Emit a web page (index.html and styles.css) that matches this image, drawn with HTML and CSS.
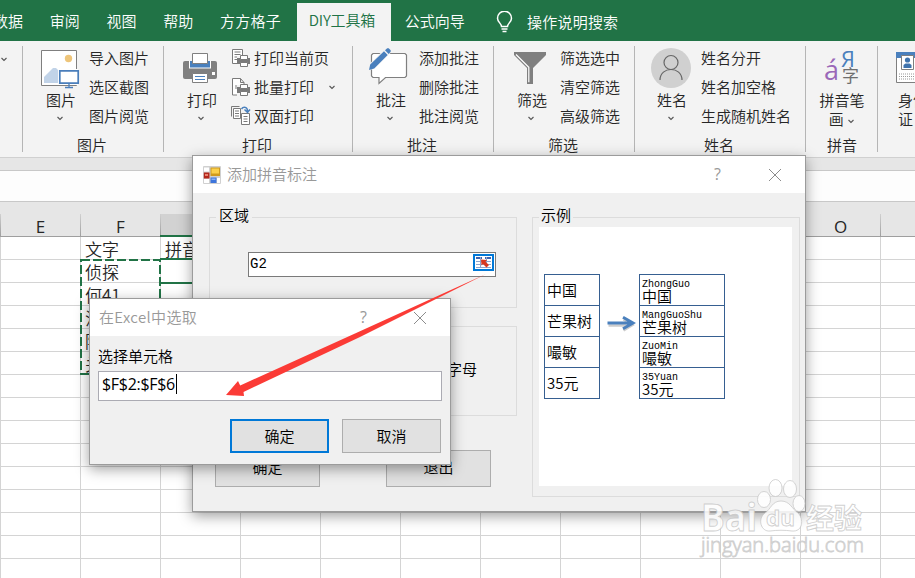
FILE: index.html
```html
<!DOCTYPE html>
<html lang="zh-CN">
<head>
  <meta charset="UTF-8">
  <meta name="viewport" content="width=device-width, initial-scale=1">
  <title>DIY工具箱 - 添加拼音标注</title>
  <link rel="stylesheet" href="styles.css">
</head>
<body>
  <!-- Tabs -->
  <nav class="tabs">
    <span class="tab">数据</span>
    <span class="tab">审阅</span>
    <span class="tab">视图</span>
    <span class="tab">帮助</span>
    <span class="tab four">方方格子</span>
    <span class="tab active">DIY工具箱</span>
    <span class="tab wide">公式向导</span>
    <svg class="bulb" width="17" height="22" viewBox="0 0 17 22" fill="none" stroke="#fff" stroke-width="1.5">
      <path d="M5.5 15.5c0-3-4-4.500-4-8.300a7 7 0 0 1 14 0c0 3.800-4 5.300-4 8.300zM5.500 18h6M6.500 20.500h4"/>
    </svg>
    <span class="search">操作说明搜索</span>
  </nav>

  <!-- Ribbon -->
  <div class="ribbon">
    <div class="group group-first"><svg class="chev" viewBox="0 0 8 8"><path d="M1.500 3L4 5.500 6.500 3"/></svg></div>

    <div class="group group-normal">
      <div class="tools">
        <div class="big">
          <svg width="56" height="46" viewBox="33 44 56 46">
            <path d="M41.500 50.500h35v35h-35z" fill="#fff" stroke="#7f7f7f"/>
            <circle cx="68.500" cy="58.500" r="3.700" fill="#eec57a"/>
            <path d="M44 83v-6l9-9h3l5 5v10z" fill="#c1d3e8"/>
            <path d="M58 69h20v16H58z" fill="#fff"/>
            <path d="M59.800 70.800h18.400v12.400H59.800z" fill="#fff" stroke="#4a7ebb" stroke-width="1.700"/>
            <path d="M69 84v3M65 87.500h8" stroke="#4a7ebb" stroke-width="1.300"/>
          </svg>
          <span>图片</span>
          <svg class="chev" viewBox="0 0 8 8"><path d="M1.500 3L4 5.500 6.500 3"/></svg>
        </div>
        <div class="list"><span>导入图片</span><span>选区截图</span><span>图片阅览</span></div>
      </div>
      <div class="caption">图片</div>
    </div>

    <div class="group group-print">
      <div class="tools">
        <div class="big">
          <svg width="56" height="46" viewBox="174 44 56 46">
            <rect x="183" y="61" width="34" height="18" rx="2" fill="#808080"/>
            <path d="M189 61h22v7.500h-22z" fill="#fff"/>
            <path d="M190 61h20v6.500h-20z" fill="#4a80bd"/>
            <path d="M192.500 53.500h15v10h-15z" fill="#fff" stroke="#7f7f7f"/>
            <path d="M192.500 73.500h15v9h-15z" fill="#fff" stroke="#7f7f7f"/>
            <path d="M195 76.500h10M195 79.500h10" stroke="#4a80bd"/>
            <path d="M212 72h3v3h-3z" fill="#fff"/>
          </svg>
          <span>打印</span>
          <svg class="chev" viewBox="0 0 8 8"><path d="M1.500 3L4 5.500 6.500 3"/></svg>
        </div>
        <div class="list">
          <span>
            <svg class="small" width="20" height="20" viewBox="0 0 20 20" fill="#fff" stroke="#7a7a7a">
              <path d="M1.500 1.500h10v14h-10z"/><path d="M3.500 4h6M3.500 6.500h6M3.500 9h4M3.500 11.500h3"/>
              <path d="M6 8h14v11H6z" stroke="none" fill="#f3f3f3"/>
              <rect x="6.500" y="10.500" width="12" height="5" fill="#7a7a7a"/><path d="M9.500 7.500h7v4h-7zM9.500 14.500h7v4h-7z"/>
            </svg>打印当前页
          </span>
          <span>
            <svg class="small" width="20" height="20" viewBox="0 0 20 20" fill="#fff" stroke="#7a7a7a">
              <path d="M1.500 1.500h8l3.500 4v12.500H1.500zM9.500 1.500v4H13"/><path d="M4 9h2M4 11h2" />
              <path d="M6 8h14v11H6z" stroke="none" fill="#f3f3f3"/>
              <rect x="6.500" y="10.500" width="12" height="5" fill="#7a7a7a"/><path d="M9.500 7.500h7v4h-7zM9.500 14.500h7v4h-7z"/>
            </svg>批量打印
            <svg class="chev" viewBox="0 0 8 8"><path d="M1.500 3L4 5.500 6.500 3"/></svg>
          </span>
          <span>
            <svg class="small" width="20" height="20" viewBox="0 0 20 20" fill="#fff" stroke="#7a7a7a">
              <path d="M.500 10.500v-10h8" fill="none"/><path d="M2.500 2.500h7v10h-7z"/><path d="M4 5h4M4 7.500h4M4 10h4"/>
              <path d="M10.500 7.500h8v11h-8z"/><path d="M12.500 10.500h4M12.500 13h4M12.500 15.500h4"/>
              <path d="M10.500 3c2-3 6-2 6 2M13.500 3.500l3 3 2.500-3" fill="none" stroke="#4a80bd" stroke-width="1.500"/>
            </svg>双面打印
          </span>
        </div>
      </div>
      <div class="caption">打印</div>
    </div>

    <div class="group group-normal">
      <div class="tools">
        <div class="big">
          <svg width="56" height="46" viewBox="363 44 56 46">
            <path d="M373 53.500h32l1.500 1.500v21l-1.500 1.500h-19.500l-6.500 6v-6h-6l-1.500-1.500V55z" fill="#fff" stroke="#7f7f7f" stroke-width="1.200"/>
            <path d="M368.500 70.500l1.500-7 16-16h5v5l-16 16z" fill="#f3f3f3"/>
            <path d="M369 70l1.200-5.500L384 51.300l3.700 3.700-13.500 13.500zM385 50.300l2.200-2.100h1.500l2 2v1.500l-2 2.200z" fill="#4a80bd"/>
          </svg>
          <span>批注</span>
          <svg class="chev" viewBox="0 0 8 8"><path d="M1.500 3L4 5.500 6.500 3"/></svg>
        </div>
        <div class="list"><span>添加批注</span><span>删除批注</span><span>批注阅览</span></div>
      </div>
      <div class="caption">批注</div>
    </div>

    <div class="group group-normal">
      <div class="tools">
        <div class="big">
          <svg width="56" height="46" viewBox="504 44 56 46">
            <path d="M514 52h32v3l-13 13v16h-6V68l-13-13z" fill="#7f7f7f"/>
            <path d="M516 54.500l12.800 12.800v15" fill="none" stroke="#fff" stroke-width="1.200"/>
          </svg>
          <span>筛选</span>
          <svg class="chev" viewBox="0 0 8 8"><path d="M1.500 3L4 5.500 6.500 3"/></svg>
        </div>
        <div class="list"><span>筛选选中</span><span>清空筛选</span><span>高级筛选</span></div>
      </div>
      <div class="caption">筛选</div>
    </div>

    <div class="group group-name">
      <div class="tools">
        <div class="big">
          <svg width="56" height="46" viewBox="644 44 56 46">
            <circle cx="671" cy="68" r="20" fill="#d0d0d0"/>
            <g fill="none" stroke="#666" stroke-width="1.200">
              <circle cx="671" cy="62.500" r="7"/><path d="M660 80c0-14 22-14 22 0"/>
            </g>
          </svg>
          <span>姓名</span>
          <svg class="chev" viewBox="0 0 8 8"><path d="M1.500 3L4 5.500 6.500 3"/></svg>
        </div>
        <div class="list"><span>姓名分开</span><span>姓名加空格</span><span>生成随机姓名</span></div>
      </div>
      <div class="caption">姓名</div>
    </div>

    <div class="group group-pinyin">
      <div class="big">
        <svg class="glyphs" width="56" height="46" viewBox="814 44 56 46">
          <text x="824" y="80" font-size="27" fill="#9a68b8">á</text>
          <text x="841" y="67" font-size="22" fill="#4a80bd">Я</text>
          <text x="842" y="82" font-size="17" fill="#6e6e6e">字</text>
        </svg>
        <span>拼音笔</span>
        <span>画 <svg class="chev" viewBox="0 0 8 8"><path d="M1.500 3L4 5.500 6.500 3"/></svg></span>
      </div>
      <div class="caption">拼音</div>
    </div>

    <div class="group group-id">
      <div class="big">
        <svg width="56" height="46" viewBox="888 44 56 46">
          <path d="M896.500 52.500h40v30h-40z" fill="#fff" stroke="#7f7f7f"/>
          <path d="M896 52h41v6h-41z" fill="#4a80bd"/>
          <path d="M901.500 55.500h12v14h-12z" fill="#fff" stroke="#7f7f7f"/>
          <circle cx="907.500" cy="60" r="2.600" fill="#3f73ad"/>
          <path d="M903.500 68v-3l2-1.500h4l2 1.500v3z" fill="#3f73ad"/>
          <path d="M899 74h20M899 76.500h20M899 79h20" stroke="#999" stroke-dasharray="1 1"/>
        </svg>
        <span>身份</span><span>证</span>
      </div>
    </div>
  </div>

  <div class="formula-bar"></div>

  <!-- Sheet -->
  <div class="col-heads">
    <span>E</span><span>F</span><span class="picked">G</span><span>H</span><span>I</span><span>J</span>
    <span>K</span><span>L</span><span>M</span><span>N</span><span>O</span><span></span>
  </div>
  <div class="sheet">
    <div class="row"><span></span><span>文字</span><span>拼音</span></div>
    <div class="row"><span></span><span>侦探</span></div>
    <div class="row"><span></span><span>何41</span></div>
    <div class="row"><span></span><span>洪</span></div>
    <div class="row"><span></span><span>陈</span></div>
    <div class="row"><span></span><span>关</span></div>
    <svg class="marquee" width="82" height="117" viewBox="0 0 82 117">
      <rect x="1" y="1" width="79" height="114"/>
    </svg>
    <div class="cursor-cell"></div>
  </div>

  <!-- Pinyin dialog -->
  <div class="window pinyin-window">
    <div class="titlebar">
      <svg class="app-icon" width="18" height="18" viewBox="0 0 18 18">
        <rect width="18" height="18" rx="1" fill="#d0d0d0"/>
        <path d="M1 1.500h5v4H1zM1 13h5v4H1zM14 12h3v5h-3z" fill="#fff"/>
        <path d="M.800 6.500h5.700v6H.800z" fill="#b3271b"/><path d="M2 8h3v2H2z" fill="#e8836f"/>
        <path d="M7.500 1.500h9.500v8.500H7.500z" fill="#d09a1c"/><path d="M8.500 2.500h7.500v5H8.500z" fill="#fbd04a"/>
        <path d="M7.500 11.500h6V17h-6z" fill="#3d75dc"/><path d="M8.500 12.500h4v1.500h-4z" fill="#88b1f6"/>
      </svg>
      <span class="title">添加拼音标注</span>
      <span class="help">?</span>
      <svg class="close" width="14" height="14" viewBox="0 0 14 14"><path d="M1 1l12 12M13 1L1 13"/></svg>
    </div>
    <div class="pinyin-body">
      <div class="left">
        <fieldset class="area">
          <legend>区域</legend>
          <div class="ref-input">
            <span>G2</span>
            <svg width="21" height="17" viewBox="0 0 21 17">
              <path d="M1 1h19v15H1z" fill="#fff" stroke="#0078d7" stroke-width="2"/>
              <path d="M3 4h6M12 4h6" stroke="#3c62ae" stroke-width="2"/>
              <path d="M3 7.500h15M3 10.500h15M3 13.500h15M7.500 3v11M13.500 3v11" stroke="#8fa5cc"/>
              <path d="M8 5.500l6 .500-1.500 1.700 3.500 3.300-2.500 2.500-3.500-3.500L8.500 11.500z" fill="#d9381e"/>
            </svg>
          </div>
        </fieldset>
        <fieldset class="letters"><span>字母</span></fieldset>
        <div class="actions"><button>确定</button><button>退出</button></div>
      </div>
      <fieldset class="sample">
        <legend>示例</legend>
        <div class="preview">
          <div class="cells before"><div>中国</div><div>芒果树</div><div>嘬敏</div><div>35元</div></div>
          <svg class="to" width="39" height="20" viewBox="0 0 39 20">
            <path d="M7.500 10.500h23M22.500 4.500l9 5.500-9 5.500" transform="translate(1 2)" fill="none" stroke="#ccc" stroke-width="2.500"/>
            <path d="M7.500 10h24M23 4.200l10 5.800-10 5.800" fill="none" stroke="#4a80bd" stroke-width="3"/>
          </svg>
          <div class="cells after">
            <div><i>ZhongGuo</i>中国</div>
            <div><i>MangGuoShu</i>芒果树</div>
            <div><i>ZuoMin</i>嘬敏</div>
            <div><i>35Yuan</i>35元</div>
          </div>
        </div>
      </fieldset>
    </div>
  </div>

  <!-- Range picker dialog -->
  <div class="window picker-window">
    <div class="titlebar">
      <span class="title">在Excel中选取</span>
      <span class="help">?</span>
      <svg class="close" width="14" height="14" viewBox="0 0 14 14"><path d="M1 1l12 12M13 1L1 13"/></svg>
    </div>
    <div class="picker-body">
      <label>选择单元格</label>
      <div class="range">$F$2:$F$6<span class="caret"></span></div>
      <div class="picker-actions"><button class="primary">确定</button><button>取消</button></div>
    </div>
  </div>

  <!-- Red pointer and watermark -->
  <svg class="overlay" width="915" height="578" viewBox="0 0 915 578">
    <path d="M486 274L360 337 243.500 392l.500 4-18-1 12-14 2.200 4.500L355 333.500z" fill="#fb3b36"/>
    <g class="watermark">
      <text x="701" y="531" font-size="38" font-weight="700" textLength="56" lengthAdjust="spacingAndGlyphs">Bai</text>
      <ellipse cx="764" cy="499.500" rx="6.500" ry="8"/>
      <ellipse cx="775.500" cy="488" rx="6.500" ry="8.500"/>
      <ellipse cx="790" cy="489" rx="6.500" ry="8.500"/>
      <ellipse cx="799" cy="503.500" rx="6" ry="8"/>
      <path d="M781 501c-9 0-10 8-16 12-8 6-4 19 5 18 8-1 14-1 22 0 11 1 12-12 6-18-6-4-8-12-17-12z"/>
      <text x="766" y="526" font-size="22" font-weight="700" textLength="29" lengthAdjust="spacingAndGlyphs">du</text>
      <text class="cjk" x="806" y="529" font-size="28" font-weight="700">经验</text>
      <text x="701" y="552" font-size="20" textLength="163" lengthAdjust="spacingAndGlyphs">jingyan.baidu.com</text>
    </g>
  </svg>
</body>
</html>
```
FILE: styles.css
```css
* {
  box-sizing: border-box;
}
body {
  margin: 0;
  width: 915px;
  height: 578px;
  overflow: hidden;
  position: relative;
  background: #fff;
  color: #262626;
  font-family: "Noto Sans CJK SC", sans-serif;
  font-size: 15px;
  font-weight: 350;
}

/* tabs */
.tabs {
  display: flex;
  align-items: center;
  height: 41px;
  padding-bottom: 1px;
  background: #217346;
  color: #fff;
  white-space: nowrap;
}
.tab {
  flex: none;
  padding: 0 13.400px;
}
.tab:first-child {
  margin-left: -20.500px;
}
.tab.four {
  width: 90px;
  letter-spacing: 0.200px;
}
.tab.active {
  width: 94px;
  height: 38px;
  margin-top: 4px;
  padding: 0 0 0 12px;
  line-height: 33px;
  background: #f3f3f3;
  color: #217346;
  letter-spacing: -0.150px;
}
.tab.wide {
  padding-left: 14px;
}
.bulb {
  margin: 3px 14px 0 18px;
}
.search {
  padding-top: 2px;
  letter-spacing: 0.200px;
}

/* ribbon */
.ribbon {
  display: flex;
  height: 117px;
  padding-top: 3px;
  background: #f3f3f3;
  border-bottom: 1px solid #d0d0d0;
  overflow: hidden;
}
.group {
  flex: none;
  height: 110px;
  background: linear-gradient(#b5b5b5, #b5b5b5) right 2px / 1px 106px no-repeat;
}
.group-first { width: 23px; padding: 2px 0 0 0; }
.group-normal { width: 141px; }
.group-print { width: 189px; }
.group-name { width: 171px; }
.group-pinyin { width: 72px; }
.group-id { width: 70px; }
.tools {
  display: flex;
  height: 88px;
}
.big {
  display: flex;
  flex-direction: column;
  align-items: center;
  width: 56px;
  height: 88px;
  margin-left: 10px;
  line-height: 19px;
}
.group-name .big { margin-left: 9px; }
.group-name .list { margin-left: 1px; }
.group-pinyin .big { margin-left: 8px; }
.big > svg:first-child {
  flex: none;
}
.big > .chev {
  margin: 5px 3px 0 0;
}
.big > span {
  white-space: nowrap;
}
.chev {
  width: 8px;
  height: 8px;
  fill: none;
  stroke: #555;
  stroke-width: 1.100;
}
.group-id .big {
  align-items: flex-start;
}
.group-id .big > span {
  padding-left: 10px;
}
.glyphs {
  font-family: "Open Sans", "Noto Sans CJK SC", sans-serif;
  font-weight: 400;
}
.list {
  display: flex;
  flex-direction: column;
}
.list span {
  display: flex;
  align-items: center;
  height: 29px;
  padding-bottom: 2px;
  white-space: nowrap;
}
.list .small {
  margin: 1px 3px 0 0;
}
.group-print .list {
  padding-left: 1px;
}
.list .chev {
  margin-left: 14px;
}
.caption {
  height: 26px;
  line-height: 26px;
  padding-right: 3px;
  text-align: center;
}
.group-pinyin .caption {
  padding: 0;
}

/* formula bar and sheet */
.formula-bar {
  height: 44px;
  border-top: 12px solid #e6e6e6;
  background: #fdfdfd;
  box-shadow: inset 0 1px #c8c8c8, inset 0 -1px #c8c8c8;
}
.col-heads {
  display: flex;
  height: 35px;
  padding-top: 12px;
  background: #e6e6e6;
  border-bottom: 1px solid #9f9f9f;
}
.col-heads span {
  flex: none;
  width: 80px;
  padding-left: 1px;
  text-align: center;
  line-height: 25px;
  font-family: "Open Sans", sans-serif;
  font-size: 17px;
  font-weight: 400;
  background: linear-gradient(#d0d0d0, #9f9f9f) left / 1px 100% no-repeat;
}
.col-heads .picked {
  height: 23px;
  background-color: #d2d2d2;
  border-bottom: 2px solid #217346;
  color: #217346;
}
.sheet {
  position: relative;
  height: 341px;
  font-size: 17px;
  background:
    repeating-linear-gradient(90deg, #d4d4d4 0 1px, transparent 1px 80px),
    repeating-linear-gradient(transparent 0 22px, #d4d4d4 22px 23px);
}
.row {
  display: flex;
  height: 23px;
  line-height: 24px;
}
.row span {
  width: 80px;
  padding-left: 5px;
}
.marquee {
  position: absolute;
  left: 80px;
  top: 22px;
  fill: none;
  stroke: #217346;
  stroke-width: 2;
  stroke-dasharray: 9 3;
}
.cursor-cell {
  position: absolute;
  left: 160px;
  top: 21px;
  width: 82px;
  height: 26px;
  border: 2px solid #217346;
  border-left: none;
}

/* dialogs */
.window {
  position: absolute;
  background: #f0f0f0;
  border: 1px solid #9b9b9b;
  box-shadow: 0 4px 13px rgba(0,0,0,0.38);
  color: #000;
}
.titlebar {
  display: flex;
  align-items: center;
  height: 37px;
  padding-left: 9px;
  background: #fff;
  color: #999;
}
.app-icon {
  margin-right: 6px;
}
.title {
  flex: 1;
  padding-bottom: 2px;
}
.help {
  width: 9px;
  padding-bottom: 2px;
  font-family: "Open Sans", sans-serif;
  font-size: 16px;
  font-weight: 400;
}
.close {
  margin: 0 23px 0 45px;
  fill: none;
  stroke: #8c8c8c;
}
button {
  padding: 0 0 2px;
  background: #e1e1e1;
  border: 1px solid #adadad;
  color: #000;
  font: inherit;
}
fieldset {
  margin: 0;
  padding: 0 0 0 6px;
  border: 1px solid #dcdcdc;
  min-width: 0;
}
legend {
  height: 20px;
  padding: 0 3px;
  line-height: 15px;
}
.pinyin-window {
  left: 192px;
  top: 155px;
  width: 614px;
  height: 357px;
}
.pinyin-window .titlebar {
  padding-left: 10px;
}
.pinyin-body {
  display: flex;
  gap: 15px;
  padding: 14px 0 0 16px;
}
.left {
  width: 308px;
}
.area {
  height: 101px;
}
.ref-input {
  display: flex;
  justify-content: space-between;
  width: 248px;
  height: 25px;
  margin: 25px 0 0 32px;
  padding: 1px 1px 0 1px;
  background: #fff;
  border: 1px solid #7a7a7a;
  font: 14px/20px "Liberation Mono", monospace;
}
.letters {
  height: 90px;
  margin-top: 18px;
  padding: 31px 39px 0 0;
  text-align: right;
}
.actions {
  display: flex;
  gap: 66px;
  margin: 34px 0 0 6px;
}
.actions button {
  width: 105px;
  height: 37px;
  padding-bottom: 4px;
}
.sample {
  width: 268px;
  height: 290px;
}
.sample legend {
  padding: 0 2px;
}
.preview {
  display: flex;
  width: 253px;
  height: 259px;
  padding: 47px 0 0 5px;
  background: #fff;
}
.cells {
  height: 125px;
  border: 1px solid #365f91;
}
.cells div {
  height: 31px;
  border-bottom: 1px solid #365f91;
  white-space: nowrap;
}
.cells div:last-child {
  border-bottom: none;
}
.before {
  width: 56px;
}
.before div {
  padding-left: 2px;
  line-height: 30px;
}
.after {
  width: 86px;
}
.after div {
  padding: 4px 0 0 2px;
  line-height: 12px;
}
.after i {
  display: block;
  font: 10px/11px "Liberation Mono", monospace;
}
.to {
  margin-top: 39px;
}

.picker-window {
  left: 89px;
  top: 298px;
  width: 362px;
  height: 167px;
}
.picker-window .title {
  letter-spacing: 0.350px;
}
.picker-window .help {
  width: 8px;
}
.picker-body {
  padding: 10px 8px 0;
}
.picker-body label {
  display: block;
  height: 25px;
  line-height: 20px;
}
.range {
  display: flex;
  align-items: center;
  height: 30px;
  padding: 0 0 4px 3px;
  background: #fff;
  border: 1px solid #ababb3;
  font: 16px "Open Sans", sans-serif;
  letter-spacing: -0.300px;
}
.caret {
  width: 1px;
  height: 20px;
  margin-left: 1px;
  background: #000;
}
.picker-actions {
  display: flex;
  justify-content: flex-end;
  gap: 13px;
  margin: 18px 1px 0 0;
}
.picker-actions button {
  width: 99px;
  height: 34px;
}
.picker-actions .primary {
  border: 2px solid #0078d7;
}

.overlay {
  position: absolute;
  left: 0;
  top: 0;
}
.watermark {
  fill: #fff;
  fill-opacity: 0.850;
  stroke: #c4c4c4;
  stroke-opacity: 0.800;
  stroke-width: 0.900;
  font-family: "Open Sans", sans-serif;
}
.watermark .cjk {
  font-family: "Noto Sans CJK SC", sans-serif;
}
```
